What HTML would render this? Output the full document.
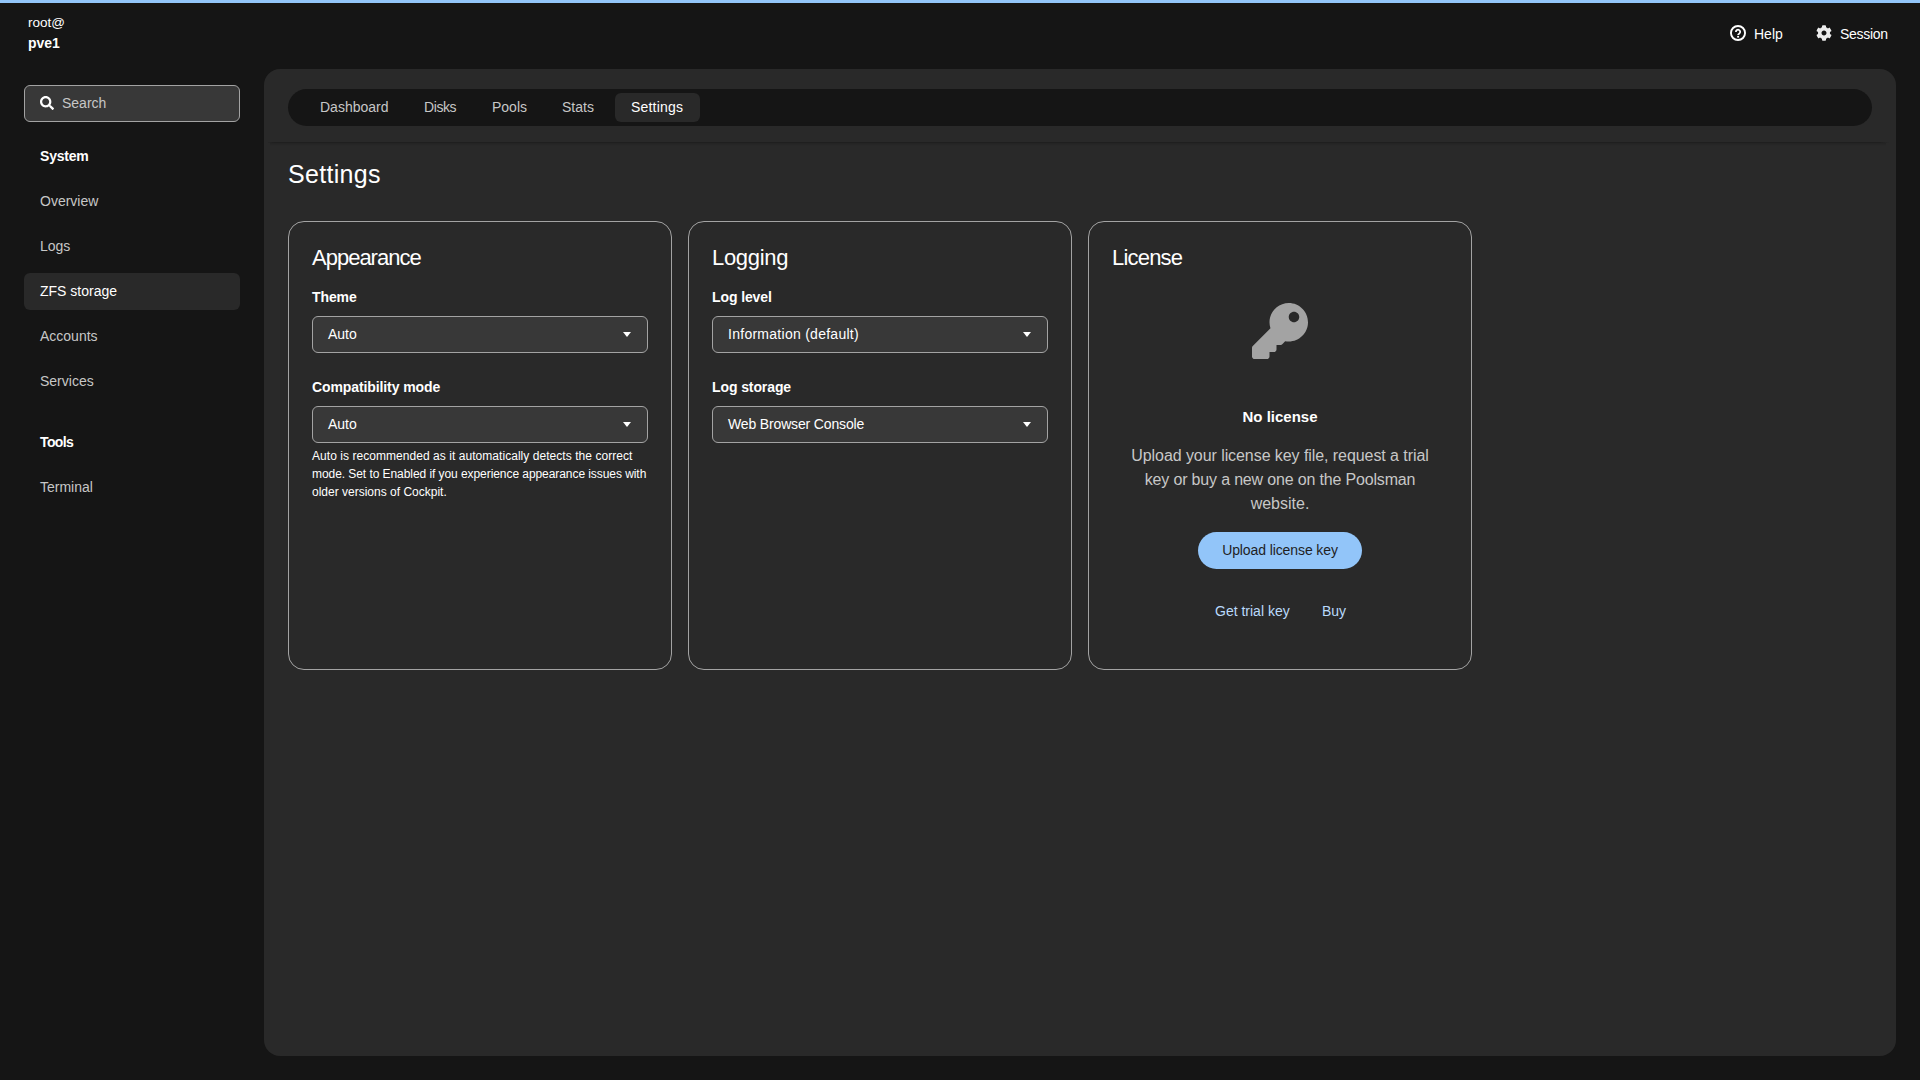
<!DOCTYPE html>
<html><head><meta charset="utf-8">
<style>
*{box-sizing:border-box;margin:0;padding:0}
html,body{width:1920px;height:1080px;overflow:hidden;background:#151515;font-family:"Liberation Sans",sans-serif;color:#fff}
.a{position:absolute;white-space:nowrap;line-height:1}
#topbar{position:absolute;left:0;top:0;width:1920px;height:3px;background:#92c5f9}
#panel{position:absolute;left:264px;top:69px;width:1632px;height:987px;background:#292929;border-radius:16px}
#nav{position:absolute;left:288px;top:89px;width:1584px;height:37px;background:#151515;border-radius:19px}
#navsel{position:absolute;left:615px;top:93px;width:85px;height:29px;background:#292929;border-radius:6px}
#sep{position:absolute;left:268px;top:142px;width:1622px;height:1px;background:linear-gradient(90deg,#262626 0,#1f1f1f 6px,#1f1f1f 1612px,#292929 100%)}
#sep2{position:absolute;left:270px;top:143px;width:1616px;height:3px;background:linear-gradient(#232323,#292929)}
#search{position:absolute;left:24px;top:85px;width:216px;height:37px;background:#383838;border:1px solid #a3a3a3;border-radius:6px}
#zfs{position:absolute;left:24px;top:273px;width:216px;height:37px;background:#292929;border-radius:6px}
.card{position:absolute;top:221px;width:384px;height:449px;border:1px solid #a3a3a3;border-radius:16px}
.sel{position:absolute;width:336px;height:37px;background:#383838;border:1px solid #a3a3a3;border-radius:6px}
.caret{position:absolute;width:0;height:0;border-left:4.5px solid transparent;border-right:4.5px solid transparent;border-top:5px solid #fff}
#btn{position:absolute;left:1198px;top:532px;width:164px;height:37px;background:#92c5f9;border-radius:19px}
.nv{font-size:14px;color:#c7c7c7}
.ttl{font-size:22px;letter-spacing:-0.6px}
.lbl{font-size:14px;font-weight:bold;letter-spacing:-0.1px}
.st{font-size:14px}
</style></head><body>
<div id="topbar"></div>
<div class="a" style="left:28px;top:16px;font-size:13.5px;color:#fff">root@</div>
<div class="a" style="left:28px;top:36px;font-size:14px;font-weight:bold;color:#fff">pve1</div>

<div id="search"></div>
<svg class="a" style="left:40px;top:95.5px" width="14" height="14" viewBox="0 0 512 512"><path fill="#fff" d="M505 442.7L405.3 343c-4.5-4.5-10.6-7-17-7H372c27.6-35.3 44-79.7 44-128C416 93.1 322.9 0 208 0S0 93.1 0 208s93.1 208 208 208c48.3 0 92.7-16.4 128-44v16.3c0 6.4 2.5 12.5 7 17l99.7 99.7c9.4 9.4 24.6 9.4 33.9 0l28.3-28.3c9.4-9.4 9.4-24.6.1-34zM208 336c-70.7 0-128-57.2-128-128 0-70.7 57.2-128 128-128 70.7 0 128 57.2 128 128 0 70.7-57.2 128-128 128z"/></svg>
<div class="a nv" style="left:62px;top:96px">Search</div>

<div class="a" style="left:40px;top:149px;font-size:14px;font-weight:bold;letter-spacing:-0.2px">System</div>
<div class="a nv" style="left:40px;top:194px">Overview</div>
<div class="a nv" style="left:40px;top:239px">Logs</div>
<div id="zfs"></div>
<div class="a" style="left:40px;top:284px;font-size:14px;color:#fff">ZFS storage</div>
<div class="a nv" style="left:40px;top:329px">Accounts</div>
<div class="a nv" style="left:40px;top:374px">Services</div>
<div class="a" style="left:40px;top:435px;font-size:14px;font-weight:bold;letter-spacing:-0.6px">Tools</div>
<div class="a nv" style="left:40px;top:480px">Terminal</div>

<!-- header right -->
<svg class="a" style="left:1730px;top:25px" width="16" height="16" viewBox="0 0 16 16"><circle cx="8" cy="8" r="7.05" fill="none" stroke="#fff" stroke-width="1.9"/><path d="M5.9 6.9 A2.15 2.15 0 1 1 9.3 8.6 C8.5 9.1 8.1 9.3 8.1 10.1" fill="none" stroke="#fff" stroke-width="1.75"/><rect x="7.15" y="10.9" width="1.9" height="1.7" fill="#fff"/></svg>
<div class="a" style="left:1754px;top:27px;font-size:14px;color:#fff">Help</div>
<svg class="a" style="left:1816px;top:25px" width="16" height="16" viewBox="0 0 512 512"><path fill="#ececec" d="M487.4 315.7l-42.6-24.6c4.3-23.2 4.3-47 0-70.2l42.6-24.6c4.9-2.8 7.1-8.6 5.5-14-11.1-35.6-30-67.8-54.7-94.6-3.8-4.1-10-5.1-14.8-2.3L380.8 110c-17.9-15.4-38.5-27.3-60.8-35.1V25.8c0-5.6-3.9-10.5-9.4-11.7-36.7-8.2-74.3-7.8-109.2 0-5.5 1.2-9.4 6.1-9.4 11.7V75c-22.2 7.9-42.8 19.8-60.8 35.1L88.7 85.5c-4.9-2.8-11-1.9-14.8 2.3-24.7 26.7-43.600 58.900-54.700 94.600-1.7 5.4.6 11.2 5.5 14L67.3 221c-4.3 23.2-4.3 47 0 70.2l-42.6 24.6c-4.9 2.8-7.1 8.6-5.5 14 11.1 35.6 30 67.8 54.7 94.6 3.8 4.1 10 5.1 14.8 2.3l42.6-24.6c17.9 15.4 38.5 27.3 60.8 35.1v49.2c0 5.6 3.9 10.5 9.4 11.7 36.7 8.2 74.3 7.8 109.2 0 5.5-1.2 9.4-6.1 9.4-11.7v-49.2c22.2-7.9 42.8-19.8 60.8-35.1l42.6 24.6c4.9 2.8 11 1.9 14.8-2.3 24.7-26.7 43.6-58.9 54.7-94.6 1.5-5.5-.7-11.3-5.6-14.1zM256 336c-44.1 0-80-35.9-80-80s35.9-80 80-80 80 35.9 80 80-35.9 80-80 80z"/></svg>
<div class="a" style="left:1840px;top:27px;font-size:14px;color:#fff;letter-spacing:-0.3px">Session</div>

<div id="panel"></div>
<div id="nav"></div>
<div id="navsel"></div>
<div id="sep"></div><div id="sep2"></div>
<div class="a nv" style="left:320px;top:100px">Dashboard</div>
<div class="a nv" style="left:424px;top:100px;letter-spacing:-0.4px">Disks</div>
<div class="a nv" style="left:492px;top:100px">Pools</div>
<div class="a nv" style="left:562px;top:100px">Stats</div>
<div class="a" style="left:631px;top:100px;font-size:14px;color:#fff;letter-spacing:0.2px">Settings</div>

<div class="a" style="left:288px;top:162px;font-size:25px;letter-spacing:0.3px;color:#fff">Settings</div>

<!-- cards -->
<div class="card" style="left:288px"></div>
<div class="card" style="left:688px"></div>
<div class="card" style="left:1088px"></div>

<div class="a ttl" style="left:312px;top:247px;letter-spacing:-1px">Appearance</div>
<div class="a lbl" style="left:312px;top:290px">Theme</div>
<div class="sel" style="left:312px;top:316px"></div>
<div class="a st" style="left:328px;top:327px">Auto</div>
<div class="caret" style="left:623px;top:332px"></div>
<div class="a lbl" style="left:312px;top:380px">Compatibility mode</div>
<div class="sel" style="left:312px;top:406px"></div>
<div class="a st" style="left:328px;top:417px">Auto</div>
<div class="caret" style="left:623px;top:422px"></div>
<div class="a" style="left:312px;top:447px;font-size:12px;line-height:18px;white-space:normal;width:340px"><span style="letter-spacing:0.05px">Auto is recommended as it automatically detects the correct</span><br><span style="letter-spacing:-0.065px">mode. Set to Enabled if you experience appearance issues with</span><br>older versions of Cockpit.</div>

<div class="a ttl" style="left:712px;top:247px;letter-spacing:-0.3px">Logging</div>
<div class="a lbl" style="left:712px;top:290px">Log level</div>
<div class="sel" style="left:712px;top:316px"></div>
<div class="a st" style="left:728px;top:327px;letter-spacing:0.27px">Information (default)</div>
<div class="caret" style="left:1023px;top:332px"></div>
<div class="a lbl" style="left:712px;top:380px">Log storage</div>
<div class="sel" style="left:712px;top:406px"></div>
<div class="a st" style="left:728px;top:417px;letter-spacing:-0.15px">Web Browser Console</div>
<div class="caret" style="left:1023px;top:422px"></div>

<div class="a ttl" style="left:1112px;top:247px;letter-spacing:-0.8px">License</div>
<svg class="a" style="left:1252px;top:303px" width="56" height="56" viewBox="0 0 512 512"><path fill="#a3a3a3" d="M512 176.001C512 273.203 433.202 352 336 352c-11.22 0-22.19-1.062-32.827-3.069l-24.012 27.014A23.999 23.999 0 0 1 261.223 384H224v40c0 13.255-10.745 24-24 24h-40v40c0 13.255-10.745 24-24 24H24c-13.255 0-24-10.745-24-24v-78.059c0-6.365 2.529-12.47 7.029-16.971l161.802-161.802C163.108 213.814 160 195.271 160 176 160 78.798 238.797.001 335.999 0 433.488-.001 512 78.511 512 176.001zM336 128c0 26.51 21.49 48 48 48s48-21.49 48-48-21.49-48-48-48-48 21.49-48 48z"/></svg>
<div class="a" style="left:1180px;top:409px;width:200px;text-align:center;font-size:15px;font-weight:bold;color:#fff">No license</div>
<div class="a" style="left:1100px;top:444px;width:360px;font-size:16px;line-height:24px;text-align:center;white-space:normal;color:#c7c7c7"><span style="letter-spacing:-0.07px">Upload your license key file, request a trial</span><br><span style="letter-spacing:-0.17px">key or buy a new one on the Poolsman</span><br>website.</div>
<div id="btn"></div>
<div class="a" style="left:1198px;top:543px;width:164px;text-align:center;font-size:14px;letter-spacing:-0.1px;color:#1f1f1f">Upload license key</div>
<div class="a" style="left:1215px;top:604px;font-size:14px;color:#b9dafc">Get trial key</div>
<div class="a" style="left:1322px;top:604px;font-size:14px;color:#b9dafc">Buy</div>
</body></html>
